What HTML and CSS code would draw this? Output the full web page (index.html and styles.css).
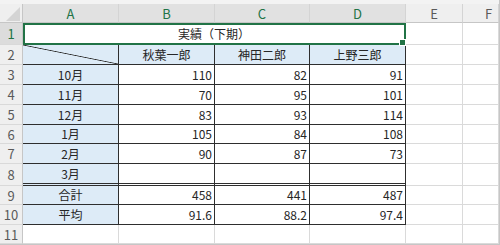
FILE: index.html
```html
<!DOCTYPE html>
<html lang="ja">
<head>
<meta charset="utf-8">
<title>実績（下期）</title>
<link rel="stylesheet" href="styles.css">
</head>
<body>
<div class="sheet">
  <div class="corner"><svg class="tri" width="14" height="14" viewBox="0 0 14 14"><polygon points="0,14 14,0 14,14" fill="#d4d4d4"/></svg></div>
  <div class="ch sel">A</div>
  <div class="ch sel">B</div>
  <div class="ch sel">C</div>
  <div class="ch sel">D</div>
  <div class="ch">E</div>
  <div class="ch f">F</div>

  <div class="rh sel">1</div>
  <div class="cell title">実績（下期）</div>
  <div class="cell"></div>
  <div class="cell"></div>

  <div class="rh">2</div>
  <div class="cell t lbl diag"></div>
  <div class="cell t lbl">秋葉一郎</div>
  <div class="cell t lbl">神田二郎</div>
  <div class="cell t lbl">上野三郎</div>
  <div class="cell"></div>
  <div class="cell"></div>

  <div class="rh">3</div>
  <div class="cell t lbl">10月</div>
  <div class="cell t num">110</div>
  <div class="cell t num">82</div>
  <div class="cell t num">91</div>
  <div class="cell"></div>
  <div class="cell"></div>

  <div class="rh">4</div>
  <div class="cell t lbl">11月</div>
  <div class="cell t num">70</div>
  <div class="cell t num">95</div>
  <div class="cell t num">101</div>
  <div class="cell"></div>
  <div class="cell"></div>

  <div class="rh">5</div>
  <div class="cell t lbl">12月</div>
  <div class="cell t num">83</div>
  <div class="cell t num">93</div>
  <div class="cell t num">114</div>
  <div class="cell"></div>
  <div class="cell"></div>

  <div class="rh">6</div>
  <div class="cell t lbl">1月</div>
  <div class="cell t num">105</div>
  <div class="cell t num">84</div>
  <div class="cell t num">108</div>
  <div class="cell"></div>
  <div class="cell"></div>

  <div class="rh">7</div>
  <div class="cell t lbl">2月</div>
  <div class="cell t num">90</div>
  <div class="cell t num">87</div>
  <div class="cell t num">73</div>
  <div class="cell"></div>
  <div class="cell"></div>

  <div class="rh">8</div>
  <div class="cell t lbl dbl">3月</div>
  <div class="cell t num dbl"></div>
  <div class="cell t num dbl"></div>
  <div class="cell t num dbl"></div>
  <div class="cell"></div>
  <div class="cell"></div>

  <div class="rh">9</div>
  <div class="cell t lbl">合計</div>
  <div class="cell t num">458</div>
  <div class="cell t num">441</div>
  <div class="cell t num">487</div>
  <div class="cell"></div>
  <div class="cell"></div>

  <div class="rh">10</div>
  <div class="cell t lbl">平均</div>
  <div class="cell t num">91.6</div>
  <div class="cell t num">88.2</div>
  <div class="cell t num">97.4</div>
  <div class="cell"></div>
  <div class="cell"></div>

  <div class="rh">11</div>
  <div class="cell"></div>
  <div class="cell"></div>
  <div class="cell"></div>
  <div class="cell"></div>
  <div class="cell"></div>
  <div class="cell"></div>
</div>
</body>
</html>
```

FILE: styles.css
```css
* {
  box-sizing: border-box;
  margin: 0;
  padding: 0;
}

body {
  margin: 0;
  background: #ffffff;
  font-family: "Noto Sans CJK JP", "Noto Sans", sans-serif;
}

.sheet {
  width: 500px;
  height: 245px;
  display: grid;
  grid-template-columns: 23px 96px 96px 95px 96px 57px 1fr;
  grid-template-rows: 19px 22px 20px 20px 20px 20px 19px 20px 22px 19px 20px 19px;
  padding-top: 4px;
  background: #f3f3f3;
  border-right: 1px solid #c6c6c6;
  border-bottom: 1px solid #c6c6c6;
}

.corner {
  background: #efefef;
  border-right: 1px solid #c6c6c6;
  border-bottom: 1px solid #c6c6c6;
  display: flex;
  justify-content: flex-end;
  align-items: flex-end;
  padding: 0 2px 1px 0;
}

.tri {
  display: block;
}

.ch,
.rh {
  background: #efefef;
  display: flex;
  align-items: center;
  justify-content: center;
  color: #5a5a5a;
  font-size: 13px;
  line-height: 1;
}

.ch {
  border-right: 1px solid #d4d4d4;
  border-bottom: 1px solid #c6c6c6;
}

.ch.sel {
  background: #e1e1e1;
  color: #217346;
}

.ch.f {
  padding-left: 16px;
}

.rh {
  border-right: 1px solid #c6c6c6;
  border-bottom: 1px solid #d9d9d9;
}

.rh.sel {
  background: #dcdcdc;
  color: #217346;
}

.cell {
  background: #ffffff;
  border-right: 1px solid #dadada;
  border-bottom: 1px solid #dadada;
  display: flex;
  align-items: center;
  padding: 0 3px;
  font-size: 12px;
  line-height: 1;
  color: #262626;
  white-space: nowrap;
}

.t {
  border-right-color: #2e2e2e;
  border-bottom-color: #2e2e2e;
}

.lbl {
  background: #ddebf7;
  justify-content: center;
}

.num {
  justify-content: flex-end;
  padding-right: 2px;
}

.dbl {
  border-bottom: 3px double #2e2e2e;
}

.diag {
  background:
    linear-gradient(to top right, transparent calc(50% - 0.8px), #2e2e2e 50%, transparent calc(50% + 0.8px)),
    #ddebf7;
}

.title {
  grid-column: 2 / 6;
  justify-content: center;
  outline: 2px solid #217346;
  outline-offset: -2px;
  position: relative;
  z-index: 1;
}

.title::after {
  content: "";
  position: absolute;
  right: 0;
  bottom: -1px;
  width: 5px;
  height: 5px;
  background: #217346;
  box-shadow: 0 0 0 1px #ffffff;
}
```
